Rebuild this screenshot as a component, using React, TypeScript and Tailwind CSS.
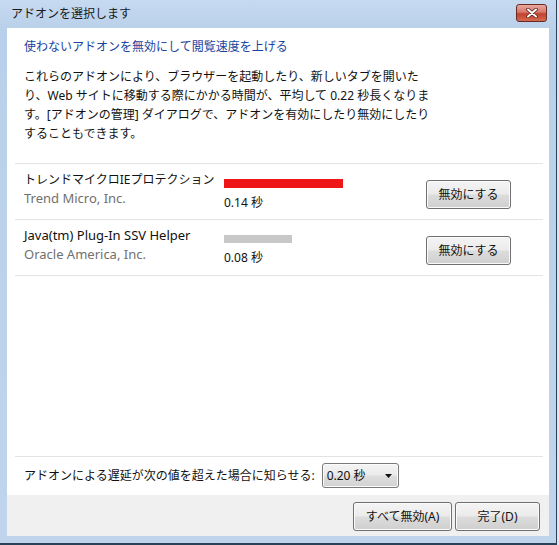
import React from "react";

type Addon = {
  name: string;
  nameClass: string;
  publisher: string;
  seconds: string;
  barWidth: number;
  barClass: string;
  barHeight: string;
};

const addons: Addon[] = [
  {
    name: "トレンドマイクロIEプロテクション",
    nameClass: "text-[12px]",
    publisher: "Trend Micro, Inc.",
    seconds: "0.14 秒",
    barWidth: 119,
    barClass: "bg-[#ee1616]",
    barHeight: "h-[9px]",
  },
  {
    name: "Java(tm) Plug-In SSV Helper",
    nameClass: "text-[13px]",
    publisher: "Oracle America, Inc.",
    seconds: "0.08 秒",
    barWidth: 68,
    barClass: "bg-[#c8c8c8]",
    barHeight: "h-[8px]",
  },
];

function WinButton({
  children,
  className,
}: {
  children: React.ReactNode;
  className: string;
}) {
  return (
    <button
      type="button"
      className={`h-[29px] rounded-[3px] border border-[#707070] bg-[linear-gradient(180deg,#f4f4f4_0%,#ebebeb_48%,#dcdcdc_52%,#cfcfcf_100%)] shadow-[inset_0_0_0_1px_#fbfbfb] text-[12px] leading-none text-[#111] ${className}`}
    >
      {children}
    </button>
  );
}

function CloseGlyph() {
  return (
    <svg width="12" height="10" viewBox="0 0 12 10">
      <path
        d="M2 1.5 L10 8.5 M10 1.5 L2 8.5"
        stroke="#5a1a14"
        strokeWidth="3.6"
        strokeLinecap="round"
      />
      <path
        d="M2 1.5 L10 8.5 M10 1.5 L2 8.5"
        stroke="#ffffff"
        strokeWidth="2"
        strokeLinecap="round"
      />
    </svg>
  );
}

export default function App() {
  return (
    <div className="w-[559px] h-[545px] bg-[#dbe7f4] font-['Noto_Sans','Noto_Sans_CJK_JP',sans-serif] text-[12px] text-[#111]">
      <div className="w-[557px] h-[545px] flex flex-col border-r border-b-2 border-[#2a4257] bg-[linear-gradient(180deg,#c6daf0_0%,#b9d0ea_30px,#c0d5ec_100%)]">
        {/* caption */}
        <div className="h-[28px] shrink-0 flex items-center justify-between pl-[11px] pr-[9px]">
          <span className="text-[12px] leading-[18px] text-[#1a1a1a] pb-[1px]">
            アドオンを選択します
          </span>
          <div className="mb-[2px] w-[31px] h-[18px] rounded-[3px] border border-[#6a2a22] bg-[linear-gradient(180deg,#e8aa9f_0%,#d5776a_45%,#c2412f_55%,#d36a50_100%)] flex items-center justify-center">
            <CloseGlyph />
          </div>
        </div>

        {/* client area */}
        <div className="flex-1 flex pl-[7px] pr-[7px]">
          <div className="flex-1 flex flex-col">
            <div className="h-[467px] bg-white flex flex-col">
              <div className="pl-[17px] pt-[9px] leading-[19px] text-[#18449e]">
                使わないアドオンを無効にして閲覧速度を上げる
              </div>
              <div className="pl-[17px] mt-[11px] leading-[19px] whitespace-nowrap">
                <div>これらのアドオンにより、ブラウザーを起動したり、新しいタブを開いた</div>
                <div>り、Web サイトに移動する際にかかる時間が、平均して 0.22 秒長くなりま</div>
                <div>す。[アドオンの管理] ダイアログで、アドオンを有効にしたり無効にしたり</div>
                <div>することもできます。</div>
              </div>

              <div className="mt-[20px] ml-[8px] mr-[6px] border-t border-[#e3e3e3]">
                {addons.map((a) => (
                  <div
                    key={a.name}
                    className="h-[56px] border-b border-[#e3e3e3] flex pl-[9px]"
                  >
                    <div className="w-[200px] pt-[6px] leading-[19px] whitespace-nowrap">
                      <div className={a.nameClass}>{a.name}</div>
                      <div className="text-[13px] text-[#707070]">{a.publisher}</div>
                    </div>
                    <div className="flex-1 pt-[15px]">
                      <div
                        className={`${a.barHeight} ${a.barClass}`}
                        style={{ width: a.barWidth }}
                      />
                      <div className="mt-[5px] leading-[19px]">{a.seconds}</div>
                    </div>
                    <div className="pt-[16px] pr-[32px]">
                      <WinButton className="w-[85px]">無効にする</WinButton>
                    </div>
                  </div>
                ))}
              </div>

              <div className="flex-1" />

              <div className="ml-[8px] mr-[6px] border-t border-[#e3e3e3] h-[39px] flex items-center pl-[9px] pb-[1px]">
                <span className="leading-[19px] whitespace-nowrap">
                  アドオンによる遅延が次の値を超えた場合に知らせる:
                </span>
                <div className="ml-[7px] w-[77px] h-[25px] rounded-[3px] border border-[#7a7a7a] bg-[linear-gradient(180deg,#f4f4f4_0%,#ebebeb_48%,#dedede_52%,#d2d2d2_100%)] shadow-[inset_0_0_0_1px_#fbfbfb] flex items-center justify-between pl-[4px] pr-[6px]">
                  <span className="leading-[19px]">0.20 秒</span>
                  <svg width="7" height="4" viewBox="0 0 7 4">
                    <path d="M0 0 H7 L3.5 4 Z" fill="#111" />
                  </svg>
                </div>
              </div>
            </div>

            {/* footer */}
            <div className="h-[41px] bg-[#f0f0f0] flex justify-end items-start pt-[7px] pr-[9px] gap-[3px]">
              <WinButton className="w-[99px]">すべて無効(A)</WinButton>
              <WinButton className="w-[85px]">完了(D)</WinButton>
            </div>
          </div>
        </div>
        <div className="h-[7px] shrink-0" />
      </div>
    </div>
  );
}
